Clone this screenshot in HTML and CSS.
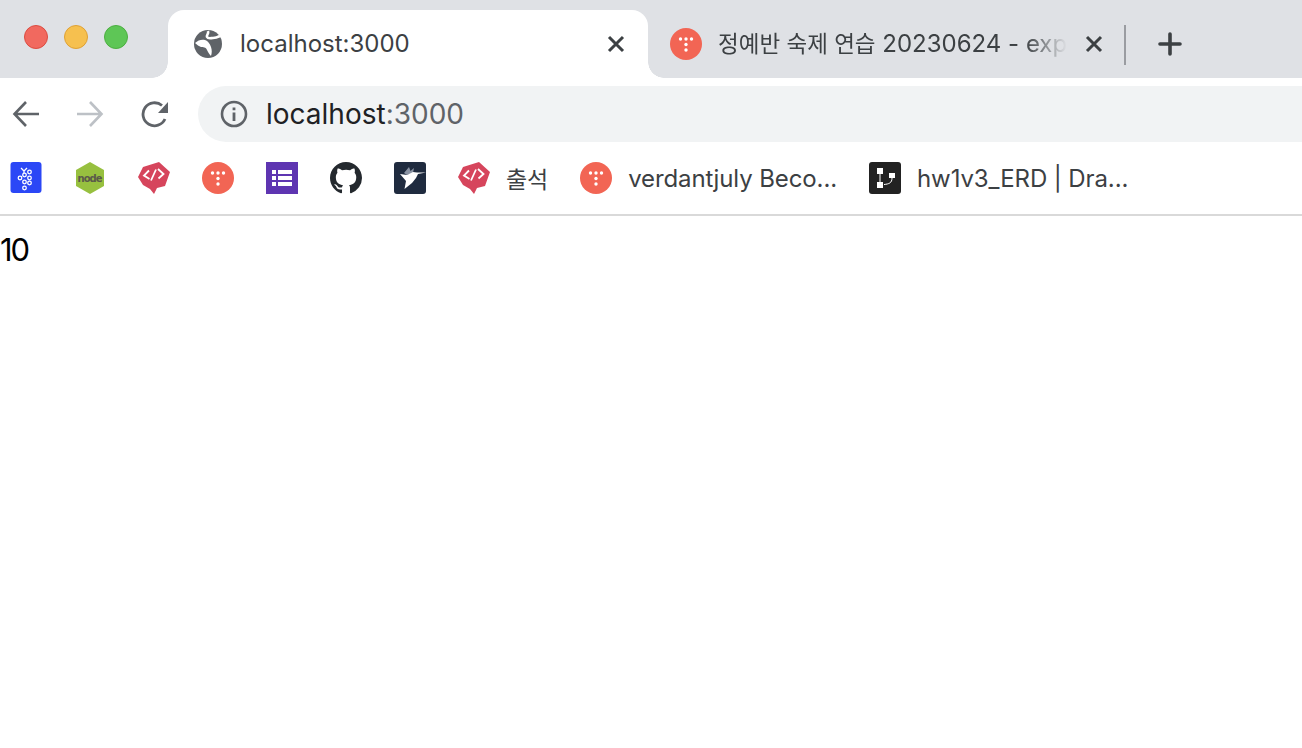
FILE: index.html
```html
<!DOCTYPE html>
<html lang="en">
<head>
    <meta charset="UTF-8">
    <meta name="viewport" content="width=device-width, initial-scale=1.0">
    <title>localhost:3000</title>
    <link rel="stylesheet" href="styles.css">
</head>
<body>
    <svg class="defs" aria-hidden="true">
        <symbol id="dots" viewBox="0 0 32 32">
            <circle cx="16" cy="16" r="16" fill="#f26554"/>
            <g fill="#fff">
                <circle cx="10.500" cy="11" r="1.700"/>
                <circle cx="16" cy="11" r="1.700"/>
                <circle cx="21.500" cy="11" r="1.700"/>
                <circle cx="16" cy="16.500" r="1.700"/>
                <circle cx="16" cy="22" r="1.700"/>
            </g>
        </symbol>
        <symbol id="bubble" viewBox="0 0 32 32">
            <path fill="#d6455c" d="M0 15 5 5 21 0l11 10-5 14-8 2-3 6-4-5-7-4z"/>
            <path fill="none" stroke="#fff" stroke-width="1.800" d="M11 8.500 6 13.500l5.500 3.500M18 7.500l-5 11M20 7l5.500 5-5 4.500"/>
        </symbol>
        <symbol id="close" viewBox="0 0 20 20">
            <path fill="none" stroke="currentColor" stroke-width="3" d="M3 3l14 14M17 3 3 17"/>
        </symbol>
    </svg>

    <header class="browser">
        <div class="tabstrip">
            <div class="traffic">
                <span class="light light-red"></span>
                <span class="light light-yellow"></span>
                <span class="light light-green"></span>
            </div>
            <div class="tab tab-active">
                <svg class="tab-icon" viewBox="0 0 28 28">
                    <circle cx="14" cy="14" r="14" fill="#5f6368"/>
                    <path fill="#fff" d="M1 13c3-3 7-4 10-3 3 1 5 4 6 7 1 3 1 6 0 9-2-2-3-4-4-6-1-3-4-3-6-3-2-1-4-2-6-4z"/>
                    <path fill="none" stroke="#fff" stroke-width="2.600" d="M14 1c1 3-2 4-1 6 1 2 4 1 6 1 3 0 5-1 7-2"/>
                </svg>
                <span class="tab-title">localhost:3000</span>
                <svg class="tab-close"><use href="#close"/></svg>
            </div>
            <div class="tab tab-other">
                <svg class="tab-icon tab-icon-large"><use href="#dots"/></svg>
                <span class="tab-title tab-fade"><span class="ko">정예반 숙제 연습</span> 20230624 - exp</span>
                <svg class="tab-close"><use href="#close"/></svg>
            </div>
            <span class="tab-divider"></span>
            <svg class="new-tab" viewBox="0 0 24 24">
                <path fill="none" stroke="#3c4043" stroke-width="3.600" stroke-linecap="round" d="M12 2v20M2 12h20"/>
            </svg>
        </div>

        <div class="toolbar">
            <svg class="nav-icon" viewBox="0 0 28 28">
                <path fill="none" stroke="#5f6368" stroke-width="2.600" d="M27 14H3M14 2 2.500 14 14 26"/>
            </svg>
            <svg class="nav-icon nav-forward" viewBox="0 0 28 28">
                <path fill="none" stroke="#bdc1c6" stroke-width="2.600" d="M1 14h24M14 2l11.500 12L14 26"/>
            </svg>
            <svg class="nav-icon" viewBox="0 0 28 28">
                <path fill="none" stroke="#5f6368" stroke-width="2.800" d="M25 19a11.500 11.500 0 1 1-3-13.500"/>
                <path fill="#5f6368" d="M28 2v11H18z"/>
            </svg>
            <div class="omnibox">
                <svg class="info-icon" viewBox="0 0 28 28">
                    <circle cx="14" cy="14" r="12" fill="none" stroke="#5f6368" stroke-width="2.600"/>
                    <path fill="#5f6368" d="M12.600 7.500h2.800v2.800h-2.800zM12.600 12.500h2.800v8.500h-2.800z"/>
                </svg>
                <span class="url">localhost<span class="url-port">:3000</span></span>
            </div>
        </div>

        <nav class="bookmarks">
            <svg class="mark" viewBox="0 0 32 32">
                <rect x="0.500" width="31" height="31" rx="3" fill="#2b47f6"/>
                <g fill="none" stroke="#fff" stroke-width="1.300">
                    <circle cx="10" cy="16" r="1.800"/>
                    <circle cx="14.500" cy="20" r="1.800"/>
                    <circle cx="14.500" cy="13" r="1.800"/>
                    <circle cx="19.500" cy="10" r="1.800"/>
                    <circle cx="19.500" cy="16" r="1.800"/>
                    <circle cx="19.500" cy="21" r="1.800"/>
                    <circle cx="14.500" cy="26" r="1.800"/>
                    <path d="M11 6l3 3 3-3M14 9v2"/>
                </g>
            </svg>
            <svg class="mark" viewBox="0 0 32 32">
                <path fill="#97c03f" d="M16 0l14 8v16l-14 8-14-8V8z"/>
                <text class="node-text" x="16" y="19.500" text-anchor="middle" textLength="25">node</text>
            </svg>
            <svg class="mark"><use href="#bubble"/></svg>
            <svg class="mark"><use href="#dots"/></svg>
            <svg class="mark" viewBox="0 0 32 32">
                <rect width="32" height="32" fill="#5e35b1"/>
                <path fill="#fff" d="M6 8h4v4H6zM12 8h14v4H12zM6 14h4v4H6zM12 14h14v4H12zM6 20h4v4H6zM12 20h14v4H12z"/>
            </svg>
            <svg class="mark" viewBox="0 0 16 16">
                <path fill="#24292e" d="M8 0C3.580 0 0 3.580 0 8c0 3.540 2.290 6.530 5.470 7.590.4.070.55-.17.55-.38 0-.19-.01-.82-.01-1.490-2.010.37-2.530-.49-2.690-.94-.09-.23-.48-.94-.82-1.130-.28-.15-.68-.52-.01-.53.63-.01 1.080.58 1.230.82.72 1.210 1.870.87 2.330.66.070-.52.28-.87.51-1.070-1.780-.2-3.640-.89-3.640-3.950 0-.87.31-1.590.82-2.150-.08-.2-.36-1.020.08-2.120 0 0 .67-.21 2.200.82.64-.18 1.320-.27 2-.27.68 0 1.360.09 2 .27 1.530-1.040 2.200-.82 2.200-.82.44 1.100.16 1.920.08 2.120.51.56.82 1.270.82 2.150 0 3.070-1.870 3.750-3.650 3.950.29.25.54.73.54 1.480 0 1.070-.01 1.930-.01 2.200 0 .21.15.46.55.38A8.013 8.013 0 0 0 16 8c0-4.420-3.580-8-8-8z"/>
            </svg>
            <svg class="mark" viewBox="0 0 32 32">
                <rect width="32" height="32" rx="3" fill="#1f2b3f"/>
                <path fill="#8a93a3" d="M10 11l5-6 1.500 4L20 6l-1 5-6 2z"/>
                <path fill="#fff" d="M6 12l7 1 6-3 4 .500 9 0-8 1.500-2 4-4 5-5 4-2.500 2 1.500-8z"/>
            </svg>
            <a class="bookmark">
                <svg class="mark"><use href="#bubble"/></svg>
                <span class="ko">출석</span>
            </a>
            <a class="bookmark">
                <svg class="mark"><use href="#dots"/></svg>
                <span>verdantjuly Beco...</span>
            </a>
            <a class="bookmark">
                <svg class="mark" viewBox="0 0 32 32">
                    <rect width="32" height="32" rx="3" fill="#222"/>
                    <path fill="#fff" d="M8 6h6v6H8zM20 11h6v5h-6zM8 20h6v6H8z"/>
                    <path fill="none" stroke="#fff" stroke-width="1" d="M11 12v8M23 16c0 5-3 6-8 6.500"/>
                </svg>
                <span>hw1v3_ERD | Dra...</span>
            </a>
        </nav>
    </header>

    <main class="page">10</main>
</body>
</html>
```

FILE: styles.css
```css
* {
    box-sizing: border-box;
}
html, body {
    margin: 0;
    height: 100%;
    overflow: hidden;
}
body {
    background-color: white;
    font-family: Inter, "Noto Sans CJK KR", sans-serif;
    color: #3c4043;
}
.defs {
    position: absolute;
    width: 0;
    height: 0;
}
.ko {
    font-size: 22.500px;
}
.browser {
    border-bottom: 2px solid #d9d9d9;
}
.tabstrip {
    display: flex;
    align-items: flex-end;
    height: 78px;
    background-color: #dfe1e5;
}
.traffic {
    display: flex;
    align-self: flex-start;
    gap: 16px;
    width: 168px;
    padding: 25px 0 0 24px;
}
.light {
    width: 24px;
    height: 24px;
    border-radius: 50%;
    border: 1px solid;
}
.light-red {
    background-color: #f1695f;
    border-color: #dc4c41;
}
.light-yellow {
    background-color: #f6c04f;
    border-color: #dfa135;
}
.light-green {
    background-color: #5ec656;
    border-color: #4caf41;
}
.tab {
    display: flex;
    align-items: center;
    height: 68px;
    position: relative;
}
.tab-active {
    width: 480px;
    padding: 0 22px 0 26px;
    background-color: white;
    border-radius: 16px 16px 0 0;
}
.tab-active::before,
.tab-active::after {
    content: "";
    position: absolute;
    bottom: 0;
    width: 16px;
    height: 16px;
}
.tab-active::before {
    left: -16px;
    background: radial-gradient(circle at 0 0, #dfe1e5 15.500px, white 16px);
}
.tab-active::after {
    right: -16px;
    background: radial-gradient(circle at 100% 0, #dfe1e5 15.500px, white 16px);
}
.tab-other {
    justify-content: space-between;
    width: 476px;
    padding: 0 20px 0 22px;
}
.tab-icon {
    flex: none;
    width: 28px;
    height: 28px;
    margin-right: 18px;
}
.tab-icon-large {
    width: 32px;
    height: 32px;
    margin-right: 16px;
}
.tab-title {
    flex: 1;
    font-size: 24px;
    line-height: 28px;
    white-space: nowrap;
    color: #3c4043;
}
.tab-fade {
    flex: none;
    margin-right: auto;
    -webkit-mask-image: linear-gradient(to right, black 88%, transparent 100%);
    mask-image: linear-gradient(to right, black 88%, transparent 100%);
}
.tab-close {
    flex: none;
    width: 20px;
    height: 20px;
    margin-left: 16px;
    color: #3c4043;
}
.tab-other .tab-close {
    margin-left: 0;
}
.tab-divider {
    align-self: flex-start;
    width: 2px;
    height: 40px;
    margin-top: 25px;
    background-color: #9a9ca1;
}
.new-tab {
    align-self: flex-start;
    width: 24px;
    height: 24px;
    margin: 32px 0 0 32px;
}
.toolbar {
    display: flex;
    align-items: center;
    height: 74px;
    padding: 8px 0 10px 12px;
}
.nav-icon {
    flex: none;
    width: 28px;
    height: 28px;
    margin-right: 36px;
}
.nav-icon:nth-child(3) {
    margin-right: 30px;
}
.omnibox {
    display: flex;
    align-items: center;
    flex: 1;
    height: 56px;
    padding-left: 22px;
    background-color: #f1f3f4;
    border-radius: 28px 0 0 28px;
}
.info-icon {
    width: 28px;
    height: 28px;
    margin-right: 18px;
}
.url {
    font-size: 28px;
    color: #202124;
}
.url-port {
    color: #5f6368;
}
.bookmarks {
    display: flex;
    align-items: center;
    gap: 32px;
    height: 62px;
    padding: 0 0 10px 10px;
}
.mark {
    flex: none;
    width: 32px;
    height: 32px;
}
.node-text {
    font-family: "DejaVu Sans", sans-serif;
    font-size: 10px;
    font-weight: bold;
    fill: #5a5a4a;
}
.bookmark {
    display: flex;
    align-items: center;
    gap: 16px;
    font-size: 24px;
    letter-spacing: -0.1px;
    color: #3c4043;
    white-space: nowrap;
}
.bookmark .ko {
    font-size: 23px;
}
.page {
    font-size: 31px;
    letter-spacing: -2px;
    line-height: 36px;
    margin-top: 16px;
    color: black;
}
```
